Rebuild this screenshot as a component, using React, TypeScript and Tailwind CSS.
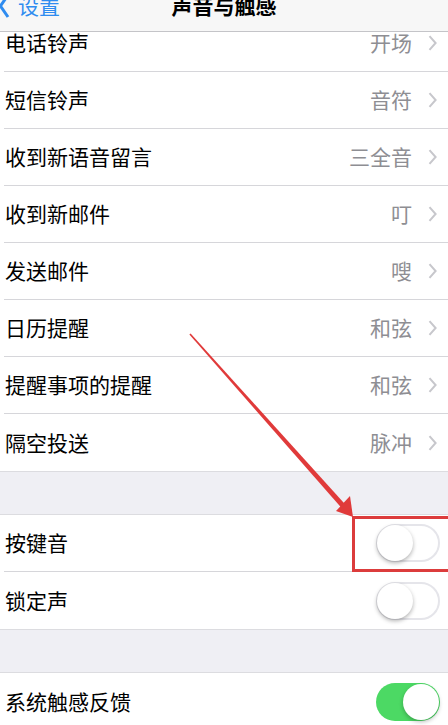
const FONT = { fontFamily: '"Noto Sans CJK SC", "Noto Sans", sans-serif' }

const SOUNDS = [
  { label: '电话铃声', value: '开场' },
  { label: '短信铃声', value: '音符' },
  { label: '收到新语音留言', value: '三全音' },
  { label: '收到新邮件', value: '叮' },
  { label: '发送邮件', value: '嗖' },
  { label: '日历提醒', value: '和弦' },
  { label: '提醒事项的提醒', value: '和弦' },
  { label: '隔空投送', value: '脉冲' },
]

function Chevron() {
  return (
    <svg width="9" height="16" viewBox="0 0 9 16" className="shrink-0">
      <path d="M1.5 1.2 L7.6 8 L1.5 14.8" fill="none" stroke="#c7c7cc" strokeWidth="2" />
    </svg>
  )
}

function Toggle({ on }: { on: boolean }) {
  return (
    <div
      className={
        on
          ? 'relative w-[64px] h-[38px] rounded-full bg-[#4cd964]'
          : 'relative w-[64px] h-[38px] rounded-full bg-white border-2 border-[#e5e5ea]'
      }
    >
      <div
        className={
          on
            ? 'absolute right-[1px] top-[1px] w-[36px] h-[36px] rounded-full bg-white shadow-[0_2px_4px_rgba(0,0,0,0.25)]'
            : 'absolute -left-[1px] -top-[1px] w-[36px] h-[36px] rounded-full bg-white shadow-[0_2px_4px_rgba(0,0,0,0.3)]'
        }
      />
    </div>
  )
}

function Row({ label, value, last }: { label: string; value: string; last?: boolean }) {
  return (
    <div className="pl-[4px] bg-white">
      <div
        className={`flex items-center h-[57px] pl-[1px] pr-[11px] ${last ? '' : 'border-b border-[#d6d6da]'}`}
      >
        <span className="flex-1 text-[21px] text-black">{label}</span>
        <span className="text-[21px] text-[#8e8e93] mr-[16px]">{value}</span>
        <Chevron />
      </div>
    </div>
  )
}

function ToggleRow({ label, on, last }: { label: string; on: boolean; last?: boolean }) {
  return (
    <div className="pl-[4px] bg-white">
      <div
        className={`flex items-center h-[57px] pl-[1px] pr-[8px] ${last ? '' : 'border-b border-[#d6d6da]'}`}
      >
        <span className="flex-1 text-[21px] text-black">{label}</span>
        <Toggle on={on} />
      </div>
    </div>
  )
}

function Band() {
  return <div className="h-[44px] bg-[#efeff4] border-y border-[#dcdce0]" />
}

export default function App() {
  return (
    <div className="relative w-[448px] h-[725px] overflow-hidden bg-white" style={FONT}>
      {/* nav bar */}
      <div className="relative h-[32px] bg-[#f7f7f7] border-b border-[#c4c4c8]">
        <div className="absolute left-0 -top-[9px] flex items-center text-[#2f8cf0]">
          <svg width="12" height="26" viewBox="0 0 12 26" className="-ml-[2px] mt-[2px]">
            <path d="M10 2 L2.5 13 L10 24" fill="none" stroke="#2f8cf0" strokeWidth="3" />
          </svg>
          <span className="text-[21px] leading-[28px] ml-[8px]">设置</span>
        </div>
        <div className="absolute left-0 right-0 -top-[9px] text-center text-[21px] leading-[28px] font-semibold text-black">
          声音与触感
        </div>
      </div>

      <div className="h-[40px] overflow-hidden">
        <div className="-mt-[17px]">
          <Row label={SOUNDS[0].label} value={SOUNDS[0].value} />
        </div>
      </div>
      {SOUNDS.slice(1).map((s, i) => (
        <Row key={s.label} label={s.label} value={s.value} last={i === SOUNDS.length - 2} />
      ))}

      <Band />
      <ToggleRow label="按键音" on={false} />
      <ToggleRow label="锁定声" on={false} last />
      <Band />
      <ToggleRow label="系统触感反馈" on last />

      {/* annotation */}
      <div className="absolute left-[352px] top-[516px] w-[120px] h-[56px] border-[3px] border-[#dc3c3c]" />
      <svg className="absolute left-0 top-0" width="448" height="725" viewBox="0 0 448 725">
        <polygon points="189.4,334.5 190.6,333.5 346.9,506.3 343.1,509.7" fill="#e03a3a" />
        <polygon points="353,517 336,511 350,496" fill="#e03a3a" />
      </svg>
    </div>
  )
}
